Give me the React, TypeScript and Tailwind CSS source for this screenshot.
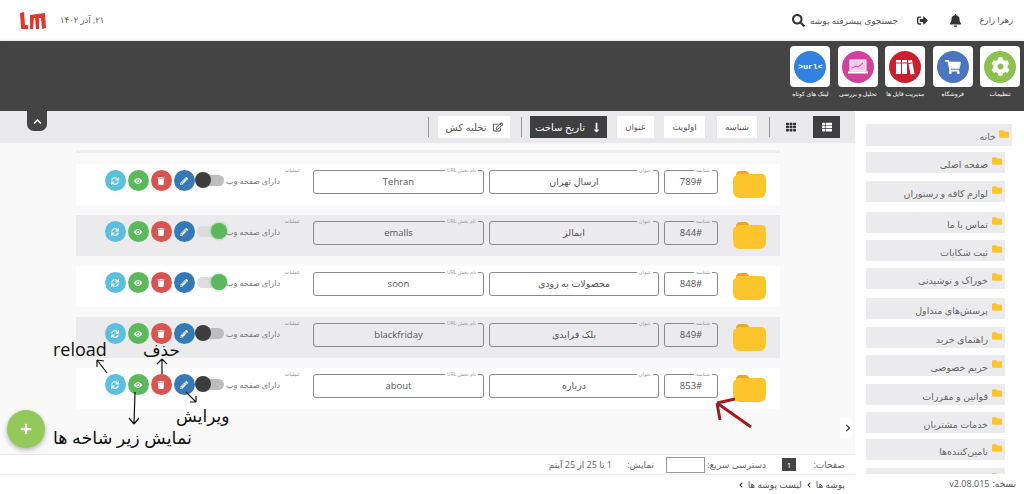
import {
  FaBell,
  FaChevronLeft,
  FaChevronRight,
  FaChevronUp,
  FaEye,
  FaFolder,
  FaLongArrowAltDown,
  FaPencilAlt,
  FaPlus,
  FaRegEdit,
  FaSearch,
  FaSignOutAlt,
  FaSync,
  FaTh,
  FaThList,
  FaTrash,
  FaCog,
  FaShoppingCart,
} from "react-icons/fa";

const fontStack = "font-['Open_Sans','DejaVu_Sans',sans-serif]";

const rows = [
  { id: "789#", title: "ارسال تهران", section: "Tehran", on: false },
  { id: "844#", title: "ایمالز", section: "emalls", on: true },
  { id: "848#", title: "محصولات به زودی", section: "soon", on: true },
  { id: "849#", title: "بلک فرایدی", section: "blackfriday", on: false },
  { id: "853#", title: "درباره", section: "about", on: false },
];

const sideItems = [
  { label: "صفحه اصلی", gap: "mt-[6px]" },
  { label: "لوازم کافه و رستوران", gap: "mt-[8px]" },
  { label: "تماس با ما", gap: "mt-[10px]" },
  { label: "ثبت شکایات", gap: "mt-[7px]" },
  { label: "خوراک و نوشیدنی", gap: "mt-[7px]" },
  { label: "پرسش‌های متداول", gap: "mt-[9px]" },
  { label: "راهنمای خرید", gap: "mt-[8px]" },
  { label: "حریم خصوصی", gap: "mt-[7px]" },
  { label: "قوانین و مقررات", gap: "mt-[8px]" },
  { label: "خدمات مشتریان", gap: "mt-[7px]" },
  { label: "تامین‌کننده‌ها", gap: "mt-[6px]" },
  { label: "", gap: "mt-[8px]" },
];

function Folder() {
  return (
    <svg width="33" height="28" viewBox="0 0 33 28" className="shrink-0">
      <path d="M3 6 Q3 1 8 1 L12 1 Q15 1 16 4 L29 4 Q33 4 33 10 L33 20 Q33 28 26 28 L7 28 Q0 28 0 20 L0 10 Q0 6 3 6Z" fill="#fdc52c" />
      <path d="M3 6 Q3 1 8 1 L12 1 Q15 1 16 4 L6 4 Q4 4 3 6Z" fill="#f0a526" />
    </svg>
  );
}

function Logo() {
  return (
    <svg width="26" height="18" viewBox="0 0 26 18" className="shrink-0">
      <path d="M0 1 L4 0 L5 13 L8 13 L8 17 L2 17 Q1 17 1 16Z" fill="#e0392b" />
      <path d="M10 3 L25 1 L26 16 L22 17 L21 6 L19 6 L19 17 L16 17 L15 6 L14 6 L13 17 L10 17Z" fill="#e0392b" />
    </svg>
  );
}

function Binders() {
  return (
    <svg width="20" height="16" viewBox="0 0 20 16">
      <path d="M1 1h5v14H1zM7 1h5v14H7z" fill="#fff" />
      <path d="M13 1.5l4-.5 2.5 14-4 .5z" fill="#fff" />
      <path d="M1 4h5M7 4h5M13.5 4.5l4-.6" stroke="#c9202f" strokeWidth="1" />
    </svg>
  );
}

function Monitor() {
  return (
    <svg width="20" height="16" viewBox="0 0 20 16" fill="none">
      <rect x="2" y="1" width="16" height="11" fill="#f6c6e2" stroke="#fff" />
      <path d="M4 9l4-2 2 1 5-4" stroke="#d1409a" strokeWidth="1" />
      <path d="M0 13.5h20" stroke="#fff" strokeWidth="2" />
    </svg>
  );
}

function Field({
  label,
  value,
  shaded,
  width,
}: {
  label: string;
  value: string;
  shaded: boolean;
  width: string;
}) {
  return (
    <div className={`relative flex h-[24px] shrink-0 items-center justify-center rounded-[3px] border border-[#8b8b8b] text-[9.5px] text-[#555] ${width}`}>
      <span className={`absolute right-[5px] top-[-4px] px-[2px] text-[5px] leading-[7px] text-[#999] ${shaded ? "bg-[#ebebed]" : "bg-white"}`}>
        {label}
      </span>
      {value}
    </div>
  );
}

function RoundButton({ color, children }: { color: string; children: React.ReactNode }) {
  return (
    <span className={`flex h-[21px] w-[21px] items-center justify-center rounded-full text-[8px] text-white ${color}`}>
      {children}
    </span>
  );
}

function Row({ row, shaded }: { row: (typeof rows)[number]; shaded: boolean }) {
  return (
    <div className={`flex h-[41px] w-[704px] items-start pr-[14px] pt-[6px] ${shaded ? "bg-[#ebebed]" : "bg-white"}`}>
      <Folder />
      <div className="mr-[15px]">
        <Field label="شناسه" value={row.id} shaded={shaded} width="w-[54px]" />
      </div>
      <div className="mr-[5px]">
        <Field label="عنوان" value={row.title} shaded={shaded} width="w-[170px]" />
      </div>
      <div className="mr-[5px]">
        <Field label="نام بخش URL" value={row.section} shaded={shaded} width="w-[171px]" />
      </div>
      <div className="relative mr-[13px] flex h-[21px] items-center">
        <span className="absolute right-0 top-[-3px] text-[5px] leading-[7px] text-[#888]">عملیات</span>
        <span className="mr-[20px] w-[52px] whitespace-nowrap text-[8px] text-[#777]">دارای صفحه وب</span>
        <span className={`relative mr-[4px] block h-[11px] w-[27px] rounded-full ${row.on ? "bg-[#dddddd]" : "bg-[#bdbdbd]"}`}>
          {row.on ? (
            <span className="absolute right-[-3px] top-[-3px] h-[16px] w-[16px] rounded-full bg-[#5cb85c] shadow-[0_0_3px_rgba(92,184,92,0.8)]" />
          ) : (
            <span className="absolute left-[-2px] top-[-3px] h-[16px] w-[16px] rounded-full bg-[#3d3d3d]" />
          )}
        </span>
        <div className="mr-[2.5px] flex gap-[2px]">
          <RoundButton color="bg-[#337ab7]"><FaPencilAlt /></RoundButton>
          <RoundButton color="bg-[#d9534f]"><FaTrash /></RoundButton>
          <RoundButton color="bg-[#5cb85c]"><FaEye /></RoundButton>
          <RoundButton color="bg-[#5bc0de]"><FaSync /></RoundButton>
        </div>
      </div>
    </div>
  );
}

function AppTile({ label, color, children }: { label: string; color: string; children: React.ReactNode }) {
  return (
    <div className="flex w-[40px] flex-col items-center">
      <div className="flex h-[41px] w-[40px] items-center justify-center rounded-[4px] bg-white">
        <span className={`flex h-[32px] w-[32px] items-center justify-center rounded-full text-white ${color}`}>
          {children}
        </span>
      </div>
      <span className="mt-[3px] whitespace-nowrap text-[6px] leading-[9px] text-white">{label}</span>
    </div>
  );
}

function ToolButton({ children, dark, width, text = "text-[8.5px]" }: { children: React.ReactNode; dark?: boolean; width: string; text?: string }) {
  return (
    <span className={`flex h-[22px] items-center justify-center gap-[6px] ${text} ${width} ${dark ? "bg-[#3f3f3f] text-white" : "bg-white text-[#555]"}`}>
      {children}
    </span>
  );
}

function Separator() {
  return <span className="block h-[20px] w-[1px] bg-[#999]" />;
}

function Annotations() {
  return (
    <>
      <svg width="1024" height="494" className="pointer-events-none absolute left-0 top-0" fill="none">
        <g stroke="#111" strokeWidth="1.2">
          <path d="M107 373 L97 360 M97 360 L97 367 M97 360 L104 361" />
          <path d="M162 374 L162 359 M162 359 L157 364 M162 359 L167 364" />
          <path d="M135 392 L134 424 M134 424 L129 418 M134 424 L139 418" />
          <path d="M186 392 L196 402 M196 402 L196 396 M196 402 L190 402" />
        </g>
        <path d="M751 427 L717 403 M717 403 L735 399 M717 403 L720 420" stroke="#a11c22" strokeWidth="3" />
      </svg>
      <span dir="ltr" className="absolute left-[53px] top-[337px] text-[18px] leading-[24px] text-[#111]">reload</span>
      <span className="absolute left-[143px] top-[338px] text-[17px] leading-[24px] text-[#111]">حذف</span>
      <span className="absolute left-[176px] top-[404px] text-[17px] leading-[24px] text-[#111]">ویرایش</span>
      <span className="absolute left-[53px] top-[425px] whitespace-nowrap text-[17.5px] leading-[24px] text-[#111]">نمایش زیر شاخه ها</span>
    </>
  );
}

export default function App() {
  return (
    <div dir="rtl" className={`relative flex h-[494px] w-[1024px] flex-col overflow-hidden bg-white ${fontStack}`}>
      {/* top bar */}
      <header className="flex h-[41px] shrink-0 items-center justify-between pl-[20px] pr-[11px] text-[8.5px] text-[#555]">
        <div className="flex items-center">
          <span className="ml-[19px] w-[32px] whitespace-nowrap">زهرا زارع</span>
          <FaBell className="ml-[21px] text-[13px] text-[#333]" />
          <FaSignOutAlt className="ml-[19px] text-[11px] text-[#333]" />
          <span className="ml-[3px] w-[90px] whitespace-nowrap text-[9px]">جستجوی پیشرفته پوشه</span>
          <FaSearch className="text-[13px] text-[#333]" />
        </div>
        <div className="flex items-center">
          <span className="ml-[14px] whitespace-nowrap">۲۱, آذر ۱۴۰۲</span>
          <Logo />
        </div>
      </header>

      {/* app strip */}
      <div className="flex h-[70px] shrink-0 gap-[7.4px] bg-[#444] pr-[4px] pt-[5px] shadow-[0_1px_3px_rgba(0,0,0,0.4)]">
        <AppTile label="تنظیمات" color="bg-[#8cc152]"><FaCog className="text-[19px]" /></AppTile>
        <AppTile label="فروشگاه" color="bg-[#4a76c0]"><FaShoppingCart className="text-[16px]" /></AppTile>
        <AppTile label="مدیریت فایل ها" color="bg-[#c9202f]"><Binders /></AppTile>
        <AppTile label="تحلیل و بررسی" color="bg-[#d1409a]"><Monitor /></AppTile>
        <AppTile label="لینک های کوتاه" color="bg-[#3182e0]">
          <span dir="ltr" className="font-['Liberation_Mono',monospace] text-[8px] font-bold">&gt;url&lt;</span>
        </AppTile>
      </div>

      <div className="flex min-h-0 flex-1">
        {/* tree */}
        <aside className="flex w-[169px] shrink-0 flex-col bg-white">
          <div className="min-h-0 flex-1 overflow-hidden pr-[12px] pt-[13px] text-[9.5px] text-[#666]">
            <div className="flex h-[22px] w-[146px] items-start bg-[#ebebed] pr-[3px] pt-[5px]">
              <FaFolder className="ml-[3px] text-[10px] text-[#fdc52c]" />
              <span className="mt-[1px]">خانه</span>
            </div>
            {sideItems.map((item, i) => (
              <div key={i} className={`mr-[7px] flex h-[21px] w-[139px] items-start bg-[#ebebed] pr-[3px] pt-[4px] ${item.gap}`}>
                <FaFolder className="ml-[4px] shrink-0 text-[10px] text-[#fdc52c]" />
                <span className="mt-[2px] whitespace-nowrap">{item.label}</span>
              </div>
            ))}
          </div>
          <div className="flex h-[20px] shrink-0 items-center pr-[8px] text-[9px] text-[#555]">
            نسخه:
            <span className="mr-[3px]">v2.08.015</span>
          </div>
        </aside>

        {/* main area */}
        <main className="relative flex min-w-0 flex-1 flex-col">
          <div className="flex h-[32px] shrink-0 items-center gap-[10px] bg-[#e9e9eb] pr-[15px]">
            <ToolButton dark width="w-[27px]"><FaThList className="text-[10px]" /></ToolButton>
            <FaTh className="mr-[7px] text-[10px] text-[#333]" />
            <span className="ml-[2px] mr-[6px]"><Separator /></span>
            <ToolButton width="w-[40px]">شناسه</ToolButton>
            <span className="mr-[2px]"><ToolButton width="w-[41px]">اولویت</ToolButton></span>
            <ToolButton width="w-[37px]">عنوان</ToolButton>
            <ToolButton dark width="w-[77px]" text="text-[10px]"><FaLongArrowAltDown className="text-[11px]" />تاریخ ساخت</ToolButton>
            <span className="mr-[-2px] flex items-center">
              <Separator />
              <span className="mr-[11px]">
                <ToolButton width="w-[72px]" text="text-[10px]"><FaRegEdit className="text-[10px] text-[#444]" />تخلیه کش</ToolButton>
              </span>
              <span className="mr-[9px]"><Separator /></span>
            </span>
          </div>

          <div className="relative min-h-0 flex-1 bg-[#f9f9f9] pr-[75px] pt-[7px]">
            <div className="h-[3px] w-[704px] bg-[#eeeeee]" />
            <div className="mt-[11px] flex flex-col gap-[10px]">
              {rows.map((row, i) => (
                <Row key={row.id} row={row} shaded={i % 2 === 1} />
              ))}
            </div>
            <span className="absolute bottom-[15px] right-0 flex h-[22px] w-[15px] items-center justify-center rounded-r-full bg-white text-[8px] text-[#333]">
              <FaChevronRight />
            </span>
            <span className="absolute bottom-[6px] left-[7px] flex h-[38px] w-[38px] items-center justify-center rounded-full bg-[#93c95a] text-[12px] text-white shadow-[0_2px_5px_rgba(0,0,0,0.3)]">
              <FaPlus />
            </span>
          </div>

          <div className="flex h-[20px] shrink-0 items-center border-t border-[#e8e8e8] bg-white pr-[10px] text-[9px] text-[#666]">
            <span className="w-[28px] whitespace-nowrap">صفحات:</span>
            <span className="mr-[21px] flex h-[13px] w-[14px] items-center justify-center bg-[#444] text-[8px] text-white">1</span>
            <span className="mr-[16px] w-[54px] whitespace-nowrap">دسترسی سریع:</span>
            <span className="mr-[7px] h-[16px] w-[39px] border border-[#999] bg-white" />
            <span className="mr-[12px] w-[27px] whitespace-nowrap">نمایش:</span>
            <span className="mr-[15px] whitespace-nowrap">1 تا 25 از 25 آیتم</span>
          </div>
          <div className="flex h-[20px] shrink-0 items-center gap-[4px] border-t border-[#eeeeee] bg-white pr-[10px] text-[9px] text-[#555]">
            پوشه ها
            <FaChevronLeft className="text-[6px] text-[#222]" />
            لیست پوشه ها
            <FaChevronLeft className="text-[6px] text-[#222]" />
          </div>
        </main>
      </div>

      {/* collapse tab for the app strip */}
      <span className="absolute left-[27px] top-[111px] flex h-[20px] w-[20px] items-center justify-center rounded-b-[7px] bg-[#444] text-[9px] text-white">
        <FaChevronUp />
      </span>

      <Annotations />
    </div>
  );
}
